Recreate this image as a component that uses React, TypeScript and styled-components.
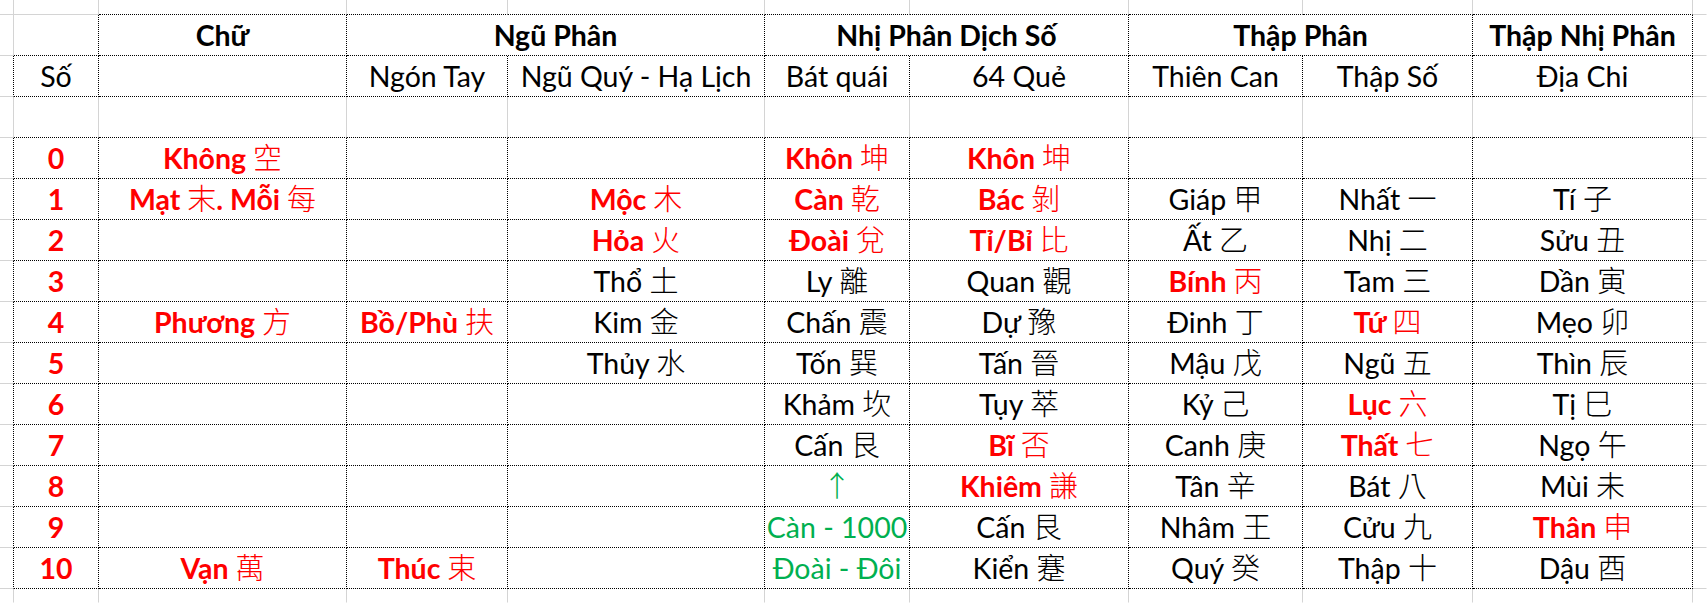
import React from 'react';
import styled, { createGlobalStyle } from 'styled-components';

type Line = 'grid' | 'dot' | 'none';
type Tone = 'black' | 'red' | 'green';

interface Entry {
  text: string;
  tone: Tone;
  bold?: boolean;
}

const GRID_GREY = '#d4d4d4';
const TONES: Record<Tone, string> = {
  black: '#000000',
  red: '#ff0000',
  green: '#00b050',
};

// pixel widths of the sheet columns: gutter, A..I, then whatever is left
const COLUMN_WIDTHS = [14, 85, 248, 161, 257, 145, 219, 174, 170, 220];

const GlobalStyle = createGlobalStyle`
  html, body {
    margin: 0;
    padding: 0;
    background: #ffffff;
    overflow: hidden;
  }
  body {
    font-family: Lato, "Noto Sans", "Noto Sans CJK TC", sans-serif;
  }
`;

const border = (kind: Line) => {
  if (kind === 'dot') return '1px dotted #000000';
  if (kind === 'grid') return `1px solid ${GRID_GREY}`;
  return '1px solid transparent';
};

const Sheet = styled.div`
  display: grid;
  grid-template-columns: ${COLUMN_WIDTHS.map((w) => `${w}px`).join(' ')} 1fr;
  grid-template-rows: 15px repeat(14, 41px) 1fr;
  width: 1707px;
  height: 603px;
  background: #ffffff;
`;

interface ICell {
  $r: Line;
  $b: Line;
  $span?: number;
  $tone?: Tone;
  $bold?: boolean;
}
const Cell = styled.div<ICell>`
  grid-column: span ${(p) => p.$span ?? 1};
  box-sizing: border-box;
  border-right: ${(p) => border(p.$r)};
  border-bottom: ${(p) => border(p.$b)};
  display: flex;
  justify-content: center;
  align-items: flex-start;
  padding-top: 3px;
  font-size: 28.5px;
  line-height: 34px;
  white-space: nowrap;
  overflow: visible;
  color: ${(p) => TONES[p.$tone ?? 'black']};
  font-weight: ${(p) => (p.$bold ? 700 : 400)};
`;

// the han characters come out thin and unbolded, as in the sheet
const Han = styled.span`
  font-family: "Noto Sans CJK TC", "Noto Sans CJK SC", sans-serif;
  font-weight: 300;
  font-size: 29px;
  line-height: 0;
`;

const HAN_RUN = /([\u2190-\u21ff\u3400-\u9fff]+)/;

const Text: React.FC<{ entry: Entry }> = ({ entry }) => (
  <span>
    {entry.text.split(HAN_RUN).map((part, i) =>
      HAN_RUN.test(part) ? <Han key={i}>{part}</Han> : <React.Fragment key={i}>{part}</React.Fragment>
    )}
  </span>
);

const red = (text: string): Entry => ({ text, tone: 'red', bold: true });
const ink = (text: string): Entry => ({ text, tone: 'black' });
const grn = (text: string): Entry => ({ text, tone: 'green' });

const SUB_HEADERS = ['Số', '', 'Ngón Tay', 'Ngũ Quý - Hạ Lịch', 'Bát quái', '64 Quẻ', 'Thiên Can', 'Thập Số', 'Địa Chi'];

const GROUPS: { title: string; span: number }[] = [
  { title: '', span: 1 },
  { title: 'Chữ', span: 1 },
  { title: 'Ngũ Phân', span: 2 },
  { title: 'Nhị Phân Dịch Số', span: 2 },
  { title: 'Thập Phân', span: 2 },
  { title: 'Thập Nhị Phân', span: 1 },
];

const ROWS: (Entry | null)[][] = [
  [red('0'), red('Không 空'), null, null, red('Khôn 坤'), red('Khôn 坤'), null, null, null],
  [red('1'), red('Mạt 末. Mỗi 每'), null, red('Mộc 木'), red('Càn 乾'), red('Bác 剝'), ink('Giáp 甲'), ink('Nhất 一'), ink('Tí 子')],
  [red('2'), null, null, red('Hỏa 火'), red('Đoài 兌'), red('Tỉ/Bỉ 比'), ink('Ất 乙'), ink('Nhị 二'), ink('Sửu 丑')],
  [red('3'), null, null, ink('Thổ 土'), ink('Ly 離'), ink('Quan 觀'), red('Bính 丙'), ink('Tam 三'), ink('Dần 寅')],
  [red('4'), red('Phương 方'), red('Bồ/Phù 扶'), ink('Kim 金'), ink('Chấn 震'), ink('Dự 豫'), ink('Đinh 丁'), red('Tứ 四'), ink('Mẹo 卯')],
  [red('5'), null, null, ink('Thủy 水'), ink('Tốn 巽'), ink('Tấn 晉'), ink('Mậu 戊'), ink('Ngũ 五'), ink('Thìn 辰')],
  [red('6'), null, null, null, ink('Khảm 坎'), ink('Tụy 萃'), ink('Kỷ 己'), red('Lục 六'), ink('Tị 巳')],
  [red('7'), null, null, null, ink('Cấn 艮'), red('Bĩ 否'), ink('Canh 庚'), red('Thất 七'), ink('Ngọ 午')],
  [red('8'), null, null, null, grn('↑'), red('Khiêm 謙'), ink('Tân 辛'), ink('Bát 八'), ink('Mùi 未')],
  [red('9'), null, null, null, grn('Càn - 1000'), ink('Cấn 艮'), ink('Nhâm 王'), ink('Cửu 九'), red('Thân 申')],
  [red('10'), red('Vạn 萬'), red('Thúc 束'), null, grn('Đoài - Đôi'), ink('Kiển 蹇'), ink('Quý 癸'), ink('Thập 十'), ink('Dậu 酉')],
];

const COLUMNS = SUB_HEADERS.length;

// one sheet row: left gutter, the nine table columns, right gutter
const EdgeRow: React.FC<{ left: Line; bottom: Line; children: React.ReactNode }> = ({ left, bottom, children }) => (
  <>
    <Cell $r={left} $b={bottom === 'none' ? 'none' : 'grid'} />
    {children}
    <Cell $r="none" $b={bottom === 'none' ? 'none' : 'grid'} />
  </>
);

const App: React.FC = () => (
  <>
    <GlobalStyle />
    <Sheet>
      {/* strip above the table */}
      <EdgeRow left="grid" bottom="grid">
        {SUB_HEADERS.map((_, i) => (
          <Cell key={i} $r="grid" $b={i === 0 ? 'grid' : 'dot'} />
        ))}
      </EdgeRow>

      {/* group titles */}
      <EdgeRow left="grid" bottom="grid">
        {GROUPS.map((g, i) => (
          <Cell key={i} $r="dot" $b="dot" $span={g.span} $bold>
            {g.title}
          </Cell>
        ))}
      </EdgeRow>

      {/* column titles */}
      <EdgeRow left="dot" bottom="grid">
        {SUB_HEADERS.map((title, i) => (
          <Cell key={i} $r="dot" $b="dot">
            {title}
          </Cell>
        ))}
      </EdgeRow>

      {/* spacer row */}
      <EdgeRow left="grid" bottom="grid">
        {SUB_HEADERS.map((_, i) => (
          <Cell key={i} $r="grid" $b="dot" />
        ))}
      </EdgeRow>

      {ROWS.map((row, r) => (
        <EdgeRow key={r} left="dot" bottom="grid">
          {row.map((entry, c) => (
            <Cell key={c} $r="dot" $b="dot" $tone={entry?.tone} $bold={entry?.bold}>
              {entry && <Text entry={entry} />}
            </Cell>
          ))}
        </EdgeRow>
      ))}

      {/* strip below the table */}
      <EdgeRow left="grid" bottom="none">
        {Array.from({ length: COLUMNS }).map((_, i) => (
          <Cell key={i} $r="grid" $b="none" />
        ))}
      </EdgeRow>
    </Sheet>
  </>
);

export default App;
